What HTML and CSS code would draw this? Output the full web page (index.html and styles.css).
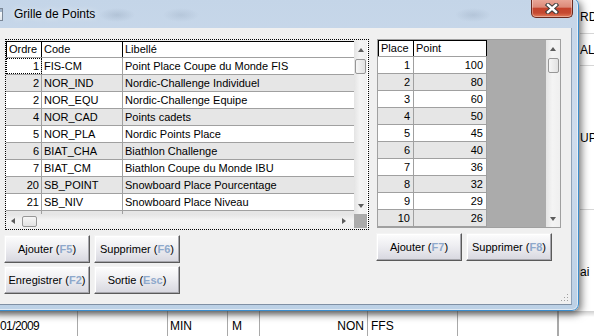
FILE: index.html
```html
<!DOCTYPE html>
<html lang="fr">
<head>
  <meta charset="UTF-8" />
  <title>Grille de Points</title>
  <link rel="stylesheet" href="styles.css">
</head>
<body>
  <!-- application derriere la fenetre -->
  <div class="desktop">
    <div class="bg-strip">
      <div class="bg-cell bg-c1">RD</div>
      <div class="bg-cell bg-c2">ALI</div>
      <div class="bg-cell bg-c3">UP</div>
      <div class="bg-cell bg-c4">ai</div>
    </div>
    <div class="bg-row">
      <div class="bg-td w-date">01/2009</div>
      <div class="bg-td w-club"></div>
      <div class="bg-td w-cat">MIN</div>
      <div class="bg-td w-sexe">M</div>
      <div class="bg-td w-non">NON</div>
      <div class="bg-td w-ffs">FFS</div>
      <div class="bg-td w-vide"></div>
      <div class="bg-td"></div>
    </div>
  </div>

  <div class="window">
    <div class="titlebar">
      <span class="app-icon"></span>
      <span class="title">Grille de Points</span>
      <button class="close" aria-label="Fermer">
        <svg width="14" height="11" viewBox="0 0 14 11">
          <path d="M3 2 L11 9 M11 2 L3 9" stroke="#3a3a3a" stroke-width="4.4" stroke-linecap="square" fill="none"/>
          <path d="M3 2 L11 9 M11 2 L3 9" stroke="#fff" stroke-width="2.4" stroke-linecap="square" fill="none"/>
        </svg>
      </button>
    </div>

    <div class="client">
      <!-- grille des codes -->
      <div class="pane pane-left">
        <div class="focus">
          <div class="grid grid-codes">
            <div class="grid-view">
              <div class="row head">
                <div class="cell c-ordre hd-first">Ordre</div>
                <div class="cell c-code hd-dark">Code</div>
                <div class="cell c-lib">Libellé</div>
              </div>
              <div class="row">
                <div class="cell c-ordre num current">1</div>
                <div class="cell c-code">FIS-CM</div>
                <div class="cell c-lib">Point Place Coupe du Monde FIS</div>
              </div>
              <div class="row">
                <div class="cell c-ordre num">2</div>
                <div class="cell c-code">NOR_IND</div>
                <div class="cell c-lib">Nordic-Challenge Individuel</div>
              </div>
              <div class="row">
                <div class="cell c-ordre num">2</div>
                <div class="cell c-code">NOR_EQU</div>
                <div class="cell c-lib">Nordic-Challenge Equipe</div>
              </div>
              <div class="row">
                <div class="cell c-ordre num">4</div>
                <div class="cell c-code">NOR_CAD</div>
                <div class="cell c-lib">Points cadets</div>
              </div>
              <div class="row">
                <div class="cell c-ordre num">5</div>
                <div class="cell c-code">NOR_PLA</div>
                <div class="cell c-lib">Nordic Points Place</div>
              </div>
              <div class="row">
                <div class="cell c-ordre num">6</div>
                <div class="cell c-code">BIAT_CHA</div>
                <div class="cell c-lib">Biathlon Challenge</div>
              </div>
              <div class="row">
                <div class="cell c-ordre num">7</div>
                <div class="cell c-code">BIAT_CM</div>
                <div class="cell c-lib">Biathlon Coupe du Monde IBU</div>
              </div>
              <div class="row">
                <div class="cell c-ordre num">20</div>
                <div class="cell c-code">SB_POINT</div>
                <div class="cell c-lib">Snowboard Place Pourcentage</div>
              </div>
              <div class="row">
                <div class="cell c-ordre num">21</div>
                <div class="cell c-code">SB_NIV</div>
                <div class="cell c-lib">Snowboard Place Niveau</div>
              </div>
              <div class="row">
                <div class="cell c-ordre"></div>
                <div class="cell c-code"></div>
                <div class="cell c-lib"></div>
              </div>
            </div>
            <div class="vscroll">
              <span class="arr-up"></span>
              <span class="vthumb"></span>
              <span class="fill"></span>
              <span class="arr-down"></span>
            </div>
            <div class="hscroll">
              <span class="arr-left"></span>
              <span class="hthumb"></span>
              <span class="fill"></span>
              <span class="arr-right"></span>
            </div>
            <div class="corner"></div>
          </div>
        </div>
        <div class="btn-rows">
          <div class="btn-row">
            <button class="btn">Ajouter (<span class="key">F5</span>)</button>
            <button class="btn">Supprimer (<span class="key">F6</span>)</button>
          </div>
          <div class="btn-row">
            <button class="btn">Enregistrer (<span class="key">F2</span>)</button>
            <button class="btn">Sortie (<span class="key">Esc</span>)</button>
          </div>
        </div>
      </div>

      <!-- points par place -->
      <div class="pane pane-right">
        <div class="grid grid-points">
          <div class="grid-view">
            <div class="row head">
              <div class="cell c-place hd-first hd-dark">Place</div>
              <div class="cell c-point hd-dark">Point</div>
            </div>
            <div class="row"><div class="cell c-place num">1</div><div class="cell c-point num">100</div></div>
            <div class="row"><div class="cell c-place num">2</div><div class="cell c-point num">80</div></div>
            <div class="row"><div class="cell c-place num">3</div><div class="cell c-point num">60</div></div>
            <div class="row"><div class="cell c-place num">4</div><div class="cell c-point num">50</div></div>
            <div class="row"><div class="cell c-place num">5</div><div class="cell c-point num">45</div></div>
            <div class="row"><div class="cell c-place num">6</div><div class="cell c-point num">40</div></div>
            <div class="row"><div class="cell c-place num">7</div><div class="cell c-point num">36</div></div>
            <div class="row"><div class="cell c-place num">8</div><div class="cell c-point num">32</div></div>
            <div class="row"><div class="cell c-place num">9</div><div class="cell c-point num">29</div></div>
            <div class="row"><div class="cell c-place num">10</div><div class="cell c-point num">26</div></div>
          </div>
          <div class="workspace"></div>
          <div class="vscroll">
            <span class="arr-up"></span>
            <span class="vthumb"></span>
            <span class="fill"></span>
            <span class="arr-down"></span>
          </div>
        </div>
        <div class="btn-rows">
          <div class="btn-row">
            <button class="btn">Ajouter (<span class="key">F7</span>)</button>
            <button class="btn">Supprimer (<span class="key">F8</span>)</button>
          </div>
        </div>
      </div>

      <svg class="grip" width="9" height="9" viewBox="0 0 9 9">
        <rect x="7" y="1" width="1" height="1" fill="#a0a0a0"/>
        <rect x="4" y="4" width="1" height="1" fill="#a0a0a0"/>
        <rect x="7" y="4" width="1" height="1" fill="#a0a0a0"/>
        <rect x="1" y="7" width="1" height="1" fill="#a0a0a0"/>
        <rect x="4" y="7" width="1" height="1" fill="#a0a0a0"/>
        <rect x="7" y="7" width="1" height="1" fill="#a0a0a0"/>
      </svg>
    </div>
  </div>
</body>
</html>
```

FILE: styles.css
```css
* {
  box-sizing: border-box;
}
body {
  margin: 0;
  width: 594px;
  height: 336px;
  overflow: hidden;
  position: relative;
  background: #fff;
  font-family: "Liberation Sans", Arial, sans-serif;
  font-size: 11px;
  color: #000;
}

/* application en fond */
.desktop {
  display: grid;
  grid-template-columns: 1fr 15px;
  grid-template-rows: 311px 25px;
  height: 336px;
}
.bg-strip {
  grid-column: 2;
  grid-row: 1;
  display: flex;
  flex-direction: column;
  overflow: hidden;
  font-size: 12px;
  padding-left: 1px;
}
.bg-cell {
  flex: none;
  display: flex;
  align-items: center;
  border-bottom: 1px solid #d6d6d6;
  white-space: nowrap;
}
.bg-c1 { height: 34px; }
.bg-c2 { height: 32px; }
.bg-c3 { height: 144px; }
.bg-c4 { height: 124px; }
.bg-row {
  grid-column: 1 / 3;
  grid-row: 2;
  display: flex;
  font-size: 12px;
  background: linear-gradient(#cfcfcf, #fff 6px);
}
.bg-td {
  flex: none;
  display: flex;
  align-items: center;
  padding-top: 5px;
  border-right: 1px solid #a9a9a9;
  white-space: nowrap;
  overflow: hidden;
}
.w-date { width: 78px; letter-spacing: -0.6px; }
.w-club { width: 90px; }
.w-cat { width: 60px; padding-left: 2px; }
.w-sexe { width: 32px; padding-left: 4px; }
.w-non { width: 108px; justify-content: flex-end; padding-right: 3px; }
.w-ffs { width: 90px; padding-left: 3px; }
.w-vide { width: 100px; }

/* fenetre */
.window {
  position: absolute;
  left: -12px;
  top: -2px;
  width: 591px;
  height: 313px;
  padding: 0 6px 5px 7px;
  border: 1px solid #3a8ccc;
  border-radius: 7px;
  background: linear-gradient(#c4d5e8, #cfdced 45%, #bcd1e6);
  box-shadow: inset 0 0 0 1px rgba(255,255,255,0.55), 2px 3px 9px rgba(0,0,0,0.6);
  display: flex;
  flex-direction: column;
}
.titlebar {
  position: relative;
  height: 29px;
  flex: none;
  margin: 0 -6px 0 -7px;
  display: flex;
  align-items: center;
  background:
    radial-gradient(ellipse 18px 7px at 128px 16px, rgba(90,110,135,0.18), transparent),
    radial-gradient(ellipse 18px 7px at 192px 16px, rgba(90,110,135,0.14), transparent),
    radial-gradient(ellipse 18px 7px at 484px 16px, rgba(90,110,135,0.16), transparent);
}
.app-icon {
  width: 14px;
  height: 13px;
  margin-top: 1px;
  border: 1px solid #7b8796;
  background: linear-gradient(#ffffff, #dfe5ec);
  box-shadow: inset 0 3px 0 #9fb3c9;
}
.title {
  margin-left: 11px;
  font-size: 12px;
  color: #000;
  text-shadow: 0 0 6px rgba(255,255,255,0.9);
}
.close {
  position: absolute;
  top: 0;
  right: 5px;
  width: 42px;
  height: 19px;
  padding: 0;
  border: 1px solid #6b2a1f;
  border-top: none;
  border-radius: 0 0 5px 5px;
  background: linear-gradient(#eaa99b 0%, #dc8a79 45%, #c4432d 52%, #c64a32 78%, #e27d5c 100%);
  box-shadow: inset 0 0 0 1px rgba(255,255,255,0.35);
  display: flex;
  align-items: center;
  justify-content: center;
}

.client {
  position: relative;
  flex: 1;
  background: #f0f0f0;
  border-right: 1px solid #8ea2b8;
  border-bottom: 1px solid #7f90a4;
  padding: 11px 0 0 9px;
  display: flex;
  gap: 8px;
}
.grip {
  position: absolute;
  right: 2px;
  bottom: 2px;
}

.pane {
  flex: none;
  display: flex;
  flex-direction: column;
}
.pane-left { width: 364px; }
.pane-right { width: 184px; }

.focus {
  border: 1px dotted #000;
  padding: 1px 0 1px 0;
}

/* grilles */
.grid {
  background: #fff;
}
.grid-codes {
  display: grid;
  grid-template-columns: 348px 13px;
  grid-template-rows: 173px 14px;
}
.grid-view {
  overflow: hidden;
}
.row {
  display: flex;
  height: 17px;
  border-bottom: 1px solid #a0a0a0;
  background: #fff;
}
.grid-view .row:nth-child(odd) {
  background: #e6e6e6;
}
.grid-view .row.head {
  background: #fff;
  border-top: 1px solid #000;
}
.cell {
  flex: none;
  height: 100%;
  padding: 0 2px;
  line-height: 16px;
  border-right: 1px solid #a0a0a0;
  white-space: nowrap;
  overflow: hidden;
}
.head .cell {
  line-height: 15px;
}
.head .hd-first {
  border-left: 1px solid #000;
}
.head .hd-dark {
  border-right-color: #000;
}
.num {
  text-align: right;
}
.current {
  outline: 1px dotted #000;
  outline-offset: -1px;
}
.c-ordre { width: 36px; }
.c-code { width: 81px; }
.c-lib { width: 300px; }
.head .c-ordre { border-right-color: #000; }

.grid-points {
  height: 189px;
  border: 1px solid #a0a0a0;
  display: flex;
}
.grid-points .grid-view {
  flex: none;
  width: 109px;
}
.c-place { width: 36px; padding-right: 3px; }
.c-point { width: 73px; padding-right: 3px; }
.workspace {
  flex: 1;
  background: #ababab;
}

/* barres de defilement */
.vscroll {
  width: 13px;
  display: flex;
  flex-direction: column;
  align-items: center;
  background: linear-gradient(to right, #e4e4e4, #f4f4f4 45%, #efefef);
}
.grid-points .vscroll {
  width: 14px;
  flex: none;
}
.hscroll {
  display: flex;
  align-items: center;
  background: linear-gradient(#e4e4e4, #f4f4f4 45%, #efefef);
}
.corner {
  background: #ababab;
}
.fill {
  flex: 1;
}
.arr-up,
.arr-down {
  width: 0;
  height: 0;
  border-left: 3.5px solid transparent;
  border-right: 3.5px solid transparent;
}
.arr-up {
  margin-top: 7px;
  border-bottom: 4px solid #5c5c5c;
}
.arr-down {
  margin-bottom: 6px;
  border-top: 4px solid #5c5c5c;
}
.arr-left,
.arr-right {
  width: 0;
  height: 0;
  border-top: 3.5px solid transparent;
  border-bottom: 3.5px solid transparent;
}
.arr-left {
  margin-left: 5px;
  border-right: 4px solid #5c5c5c;
}
.arr-right {
  margin-right: 8px;
  border-left: 4px solid #5c5c5c;
}
.vthumb {
  width: 11px;
  height: 15px;
  margin-top: 7px;
  border: 1px solid #979797;
  border-radius: 2px;
  background: linear-gradient(to right, #f6f6f6, #e2e2e2);
}
.hthumb {
  width: 15px;
  height: 11px;
  margin-left: 7px;
  border: 1px solid #979797;
  border-radius: 2px;
  background: linear-gradient(#f6f6f6, #e2e2e2);
}

/* boutons */
.btn-rows {
  margin: 5px 0 0 -1px;
  display: flex;
  flex-direction: column;
  gap: 3px;
}
.btn-row {
  display: flex;
  gap: 4px;
}
.btn {
  width: 86px;
  height: 28px;
  padding: 0;
  border: 1px solid;
  border-color: #f4f4f4 #5a5a5a #5a5a5a #f4f4f4;
  box-shadow: inset -1px -1px #a7a7ad, inset 1px 1px #fff;
  background: linear-gradient(#fdfdfd, #ececf0 50%, #d7d7df);
  font-family: "Liberation Sans", Arial, sans-serif;
  font-size: 11px;
  color: #000;
}
.btn .key {
  color: #8ea8cb;
  font-weight: bold;
}
```
